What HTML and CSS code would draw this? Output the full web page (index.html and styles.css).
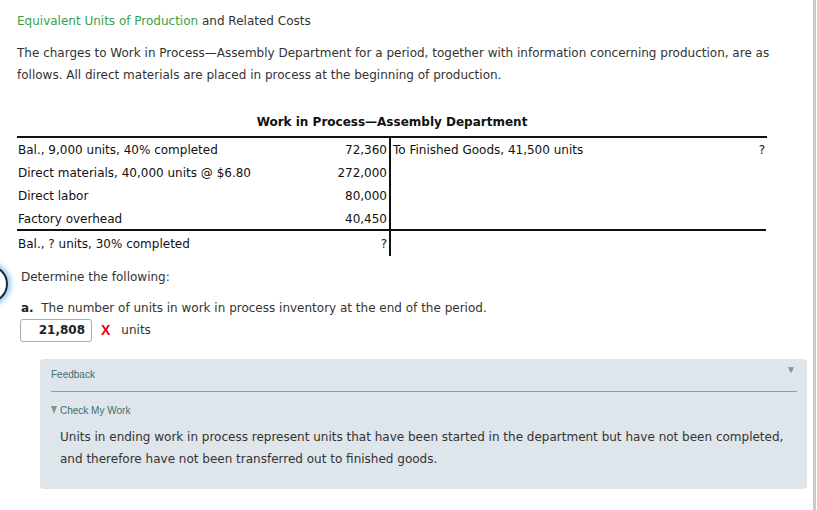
FILE: index.html
```html
<!DOCTYPE html>
<html>
<head>
<meta charset="utf-8">
<link rel="stylesheet" href="styles.css">
</head>
<body>
<div class="frame">
  <div class="page">
    <div class="title"><span class="green">Equivalent Units of Production</span> and Related Costs</div>
    <p class="intro">The charges to Work in Process—Assembly Department for a period, together with information concerning production, are as follows. All direct materials are placed in process at the beginning of production.</p>

    <div class="caption">Work in Process—Assembly Department</div>
    <div class="taccount">
      <div class="side left">
        <div class="row"><span>Bal., 9,000 units, 40% completed</span><span>72,360</span></div>
        <div class="row"><span>Direct materials, 40,000 units @ $6.80</span><span>272,000</span></div>
        <div class="row"><span>Direct labor</span><span>80,000</span></div>
        <div class="row last"><span>Factory overhead</span><span>40,450</span></div>
        <div class="row bal"><span>Bal., ? units, 30% completed</span><span>?</span></div>
      </div>
      <div class="side right">
        <div class="row"><span>To Finished Goods, 41,500 units</span><span>?</span></div>
        <div class="row"></div>
        <div class="row"></div>
        <div class="row last"></div>
        <div class="row bal"></div>
      </div>
    </div>

    <div class="question">
      <span class="hint"></span>
      <div class="determine">Determine the following:</div>
      <div class="qa"><b>a.</b>&nbsp; The number of units in work in process inventory at the end of the period.</div>
      <div class="answer">
        <span class="input">21,808</span>
        <span class="wrong">X</span>
        <span class="unit">units</span>
      </div>
    </div>

    <div class="feedback">
      <div class="fb-head"><span>Feedback</span><span class="fb-arrow">▼</span></div>
      <div class="fb-check"><svg class="tri" width="6" height="8" viewBox="0 0 6 8"><path d="M0 0H6L3 8Z" fill="#8a9095"/></svg><span>Check My Work</span></div>
      <p class="fb-text">Units in ending work in process represent units that have been started in the department but have not been completed, and therefore have not been transferred out to finished goods.</p>
    </div>
  </div>
</div>
</body>
</html>
```

FILE: styles.css
```css
html, body {
  margin: 0;
  padding: 0;
  background: #fff;
}
body {
  font-family: "DejaVu Sans", Verdana, sans-serif;
  font-size: 12px;
  color: #333;
  overflow: hidden;
}
.frame {
  width: 813px;
  height: 510px;
  border-right: 3px solid #c9c9c9;
  overflow: hidden;
}
.page {
  padding: 11px 0 0 17px;
  position: relative;
}
.title {
  line-height: 20px;
  height: 20px;
}
.green {
  color: #3aa04a;
}
.intro {
  margin: 11px 0 0 0;
  line-height: 22px;
  width: 770px;
}
.caption {
  margin-top: 26px;
  width: 750px;
  text-align: center;
  font-weight: bold;
  color: #111;
  line-height: 20px;
}
.taccount {
  margin-top: 4px;
  width: 750px;
  display: flex;
  border-top: 2px solid #111;
  color: #111;
}
.side {
  width: 375px;
  display: flex;
  flex-direction: column;
}
.side.left {
  border-right: 2px solid #111;
  width: 374px;
  box-sizing: border-box;
}
.row {
  height: 21px;
  padding-top: 2px;
  line-height: 21px;
  display: flex;
  justify-content: space-between;
}
.left .row {
  padding-right: 2px;
  padding-left: 1px;
}
.right .row {
  padding-left: 2px;
  padding-right: 1px;
}
.row.last {
  border-bottom: 2px solid #111;
  height: 20px;
  line-height: 20px;
}
.row.bal {
  height: 23px;
  line-height: 23px;
}
.question {
  position: relative;
  padding-left: 4px;
  margin-top: 9px;
}
.hint {
  position: absolute;
  left: -47px;
  top: 0px;
  width: 34px;
  height: 34px;
  border: 2px solid #222;
  border-radius: 50%;
  box-shadow: 0 0 5px 3px rgba(80, 170, 240, 0.6);
}
.determine {
  line-height: 22px;
  padding-top: 1px;
}
.qa {
  margin-top: 9px;
  line-height: 22px;
}
.qa b {
  color: #222;
}
.answer {
  display: flex;
  align-items: center;
  margin-left: -1px;
  margin-top: -1px;
  height: 24px;
}
.input {
  width: 72px;
  height: 23px;
  box-sizing: border-box;
  border: 1px solid #aaa;
  border-radius: 3px;
  text-align: right;
  padding-right: 6px;
  font-weight: bold;
  line-height: 21px;
  color: #222;
}
.wrong {
  color: #e8000b;
  font-weight: bold;
  font-family: "Liberation Sans", Arial, sans-serif;
  font-size: 14px;
  margin-left: 9px;
}
.unit {
  margin-left: 11px;
}
.feedback {
  margin: 17px 0 0 23px;
  width: 767px;
  height: 130px;
  box-sizing: border-box;
  background: #dee5eb;
  border-radius: 4px;
  padding: 0 10px 0 11px;
}
.fb-head {
  font-family: "Liberation Sans", Arial, sans-serif;
  font-size: 10px;
  color: #3f6e6e;
  display: flex;
  justify-content: space-between;
  height: 32px;
  line-height: 31px;
  border-bottom: 1px solid #939a9e;
}
.fb-arrow {
  color: #8a9095;
  font-size: 10px;
  margin-right: 1px;
  line-height: 22px;
}
.fb-check {
  font-family: "Liberation Sans", Arial, sans-serif;
  font-size: 10px;
  color: #3f6e6e;
  margin-top: 12px;
  line-height: 13px;
  display: flex;
  align-items: center;
}
.tri {
  display: block;
  margin: -2px 3px 0 0;
}
.fb-text {
  margin: 9px 0 0 9px;
  line-height: 22px;
  color: #333;
}
```
